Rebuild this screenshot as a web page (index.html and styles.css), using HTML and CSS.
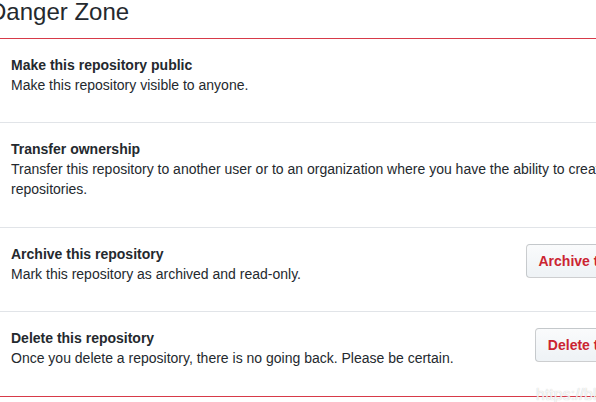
FILE: index.html
```html
<!DOCTYPE html>
<html>
<head>
<meta charset="utf-8">
<link rel="stylesheet" href="styles.css">
</head>
<body>
<div class="page">
  <h2 class="subhead">Danger Zone</h2>
  <div class="box">
    <div class="row">
      <div class="info">
        <div class="title">Make this repository public</div>
        <p class="desc">Make this repository visible to anyone.</p>
      </div>
      <button class="btn">Make public</button>
    </div>
    <div class="row row-tall">
      <div class="info">
        <div class="title">Transfer ownership</div>
        <p class="desc">Transfer this repository to another user or to an organization where you have the ability to create repositories.</p>
      </div>
      <button class="btn">Transfer</button>
    </div>
    <div class="row">
      <div class="info">
        <div class="title">Archive this repository</div>
        <p class="desc">Mark this repository as archived and read-only.</p>
      </div>
      <button class="btn">Archive this repository</button>
    </div>
    <div class="row row-last">
      <div class="info">
        <div class="title">Delete this repository</div>
        <p class="desc">Once you delete a repository, there is no going back. Please be certain.</p>
      </div>
      <button class="btn">Delete this repository</button>
    </div>
  </div>
</div>
<div class="watermark">https://blog.csdn.net</div>
</body>
</html>
```
FILE: styles.css
```css
html, body {
  margin: 0;
  padding: 0;
  overflow: hidden;
  background: #fff;
}
body {
  font-family: "Liberation Sans", Arial, sans-serif;
  font-size: 14px;
  line-height: 20px;
  color: #24292e;
  width: 596px;
  height: 402px;
  position: relative;
}
.page {
  width: 727px;
  margin-left: -6px;
}
.subhead {
  margin: -6px 0 8px -5px;
  font-size: 24px;
  font-weight: normal;
  line-height: 36px;
  color: #24292e;
}
.box {
  border: 1px solid #d73a49;
  border-radius: 3px;
}
.row {
  display: flex;
  align-items: flex-start;
  padding: 16px;
  border-top: 1px solid #e1e4e8;
}
.row:first-child {
  border-top: none;
}
.row-tall,
.row-last {
  padding-bottom: 17px;
}
.info {
  flex: 1;
  min-width: 0;
}
.title {
  font-weight: bold;
}
.desc {
  margin: 0 0 11px 0;
}
.btn {
  flex: none;
  font-family: "Liberation Sans", Arial, sans-serif;
  font-size: 14px;
  font-weight: bold;
  line-height: 20px;
  padding: 6px 12px;
  color: #cb2431;
  background: linear-gradient(#fafbfc, #eff3f6 90%);
  border: 1px solid rgba(27, 31, 35, 0.2);
  border-radius: 4px;
  white-space: nowrap;
}
.watermark {
  position: absolute;
  left: 536px;
  top: 385px;
  font-family: "Liberation Sans", Arial, sans-serif;
  font-size: 16px;
  color: rgba(255, 255, 255, 0.85);
  text-shadow: 0 0 1px rgba(150, 150, 150, 0.6);
  white-space: nowrap;
}
```
